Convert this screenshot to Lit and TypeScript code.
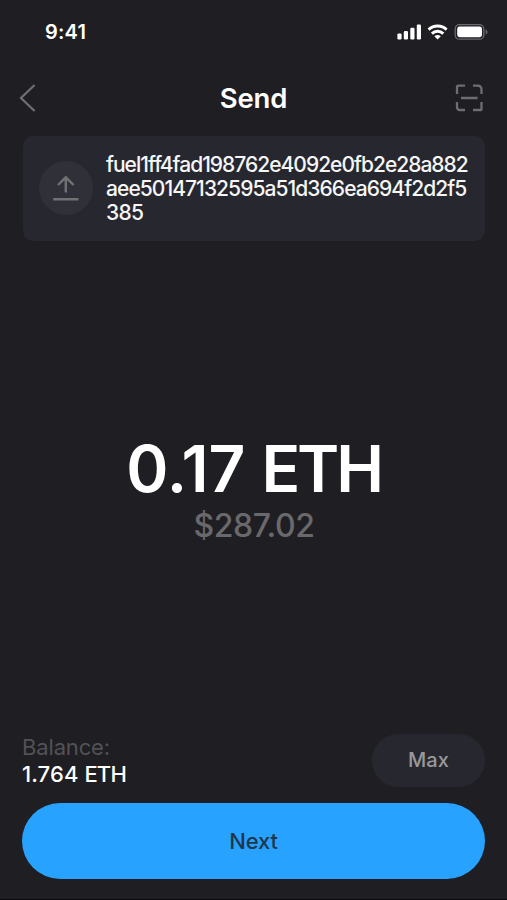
import { LitElement, html, css } from "lit";
import { customElement } from "lit/decorators.js";

@customElement("status-bar")
class StatusBar extends LitElement {
  static styles = css`
    :host { display: flex; height: 64px; box-sizing: border-box; padding: 0 19px 0 45px; align-items: center; justify-content: space-between; }
    .time { font-size: 20px; font-weight: 600; line-height: 24px; letter-spacing: 0.2px; }
    svg { display: block; }
  `;
  render() {
    return html`
      <span class="time">9:41</span>
      <svg width="92" height="20" viewBox="396 22 92 20" fill="#fff">
        <rect x="397.4" y="33.4" width="4.2" height="6" rx="1.2" />
        <rect x="403.8" y="31" width="4.2" height="8.4" rx="1.2" />
        <rect x="410.3" y="27.8" width="4.2" height="11.6" rx="1.2" />
        <rect x="416.8" y="24.6" width="4.2" height="14.8" rx="1.2" />
        <g fill="none" stroke="#fff" stroke-width="2.9">
          <path d="M428.6 29.6a13 13 0 0 1 18 0" />
          <path d="M431.9 33.6a8.2 8.2 0 0 1 11.4 0" />
        </g>
        <path d="M434.4 36.3a5 5 0 0 1 6.4 0l-3.2 3.3z" />
        <rect x="455.2" y="24.6" width="28.6" height="14.6" rx="4.3" fill="none" stroke="#6a6a6e" stroke-width="1.3" />
        <rect x="457.2" y="26.6" width="24.8" height="10.6" rx="2.4" />
        <path d="M485.6 29.4c2.5 1 2.5 4 0 5z" fill="#6a6a6e" />
      </svg>
    `;
  }
}

@customElement("send-header")
class SendHeader extends LitElement {
  static styles = css`
    :host { display: grid; grid-template-columns: 32px 1fr 32px; align-items: center; height: 68px; padding: 0 21px 0 18px; }
    .title { text-align: center; font-size: 27.5px; font-weight: 600; line-height: 34px; letter-spacing: -0.1px; padding: 0 0 1px 3px; }
    svg { display: block; fill: none; stroke: #6e6e71; }
  `;
  render() {
    return html`
      <svg width="32" height="32" viewBox="18 82 32 32" stroke-width="2.3"><path d="M34.6 85 21 98l13.6 13" /></svg>
      <span class="title">Send</span>
      <svg width="32" height="32" viewBox="454 82 32 32" stroke-width="2.3">
        <path d="M457 94v-6.8q0-1.5 1.5-1.5h6.5M473 85.7h4.5q4 0 4 4V94M481.5 102v7.3q0 .7-.7.7H473M465 110h-5q-3 0-3-3v-5M461 98h16.6" />
      </svg>
    `;
  }
}

@customElement("recipient-card")
class RecipientCard extends LitElement {
  static styles = css`
    :host { display: flex; align-items: center; height: 104.5px; box-sizing: border-box; margin: 4px 22px 0 22.5px; padding: 0 0 0 16px; border-radius: 10px; background: #27282f; }
    .badge { flex: none; display: flex; align-items: center; justify-content: center; width: 54px; height: 54px; border-radius: 50%; background: #303138; }
    .address { margin-left: 13.5px; padding-top: 2px; font-size: 21px; line-height: 24px; letter-spacing: -0.94px; font-weight: 450; color: #f6f6f7; white-space: nowrap; }
    .first { letter-spacing: -0.99px; }
    .last { letter-spacing: -0.7px; }
  `;
  render() {
    return html`
      <div class="badge">
        <svg width="28" height="28" viewBox="52 174 28 28" fill="none" stroke="#717175" stroke-width="2.4">
          <path d="M65.8 192.5V177.5M58 185l7.8-7.7 7.8 7.7M53.2 199.3h25.2" />
        </svg>
      </div>
      <div class="address">
        <div class="first">fuel1ff4fad198762e4092e0fb2e28a882</div>
        <div>aee50147132595a51d366ea694f2d2f5</div>
        <div class="last">385</div>
      </div>
    `;
  }
}

@customElement("app-root")
class AppRoot extends LitElement {
  static styles = css`
    :host { display: flex; flex-direction: column; box-sizing: border-box; height: 900px; overflow: hidden; background: #1f1e23; color: #fff; font-family: Inter, "Liberation Sans", sans-serif; border-bottom: 1px solid #0c0b0f; }
    .amounts { flex: 1; display: flex; flex-direction: column; align-items: center; padding-top: 191px; }
    .crypto { font-size: 64px; line-height: 74px; font-weight: 600; letter-spacing: 0; white-space: nowrap; }
    .unit { letter-spacing: -3.2px; }
    .fiat { font-size: 32px; line-height: 40px; color: #69696c; font-weight: 450; letter-spacing: -0.45px; padding-left: 1px; }
    .funds { display: flex; justify-content: space-between; align-items: center; margin: 0 22px; height: 54px; }
    .balance { display: flex; flex-direction: column; font-size: 22px; line-height: 27px; padding-top: 2px; }
    .label { color: #525256; letter-spacing: -0.15px; }
    .value { font-weight: 450; letter-spacing: 0.1px; }
    .value .unit { letter-spacing: -0.8px; }
    button { border: 0; margin: 0; padding: 0; font-family: inherit; }
    .max { width: 113px; height: 53px; border-radius: 27px; background: #27282f; color: #98989b; font-size: 20px; font-weight: 500; }
    .next { margin: 16px 22px 20px; height: 76px; flex: none; border-radius: 38px; background: #27a3ff; color: #20364e; font-size: 22px; font-weight: 500; letter-spacing: -0.2px; }
  `;
  render() {
    return html`
      <status-bar></status-bar>
      <send-header></send-header>
      <recipient-card></recipient-card>
      <div class="amounts">
        <div class="crypto">0.17 <span class="unit">ETH</span></div>
        <div class="fiat">$287.02</div>
      </div>
      <div class="funds">
        <div class="balance"><span class="label">Balance:</span><span class="value">1.764 <span class="unit">ETH</span></span></div>
        <button class="max">Max</button>
      </div>
      <button class="next">Next</button>
    `;
  }
}
